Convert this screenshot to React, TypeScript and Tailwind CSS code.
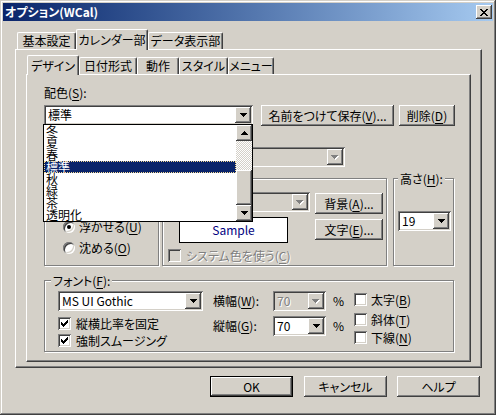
import React from "react";

const raised =
  "shadow-[inset_-1px_-1px_#404040,inset_1px_1px_#fff,inset_-2px_-2px_#808080,inset_2px_2px_#d4d0c8]";
const sunken =
  "shadow-[inset_1px_1px_#808080,inset_-1px_-1px_#fff,inset_2px_2px_#404040,inset_-2px_-2px_#d4d0c8]";
const frame =
  "shadow-[inset_-1px_-1px_#404040,inset_1px_1px_#d4d0c8,inset_-2px_-2px_#808080,inset_2px_2px_#fff]";
const panel =
  "border-t border-l border-white border-r border-b border-r-[#404040] border-b-[#404040] shadow-[inset_-1px_-1px_#808080]";
const etched = "border border-[#808080] shadow-[inset_1px_1px_#fff,1px_1px_#fff]";
const disabledText = "text-[#808080] [text-shadow:1px_1px_#fff]";

const DOWN = ["XXXXXXX", ".XXXXX.", "..XXX..", "...X..."];
const UP = ["...X...", "..XXX..", ".XXXXX.", "XXXXXXX"];
const CROSS = ["XX....XX", ".XX..XX.", "..XXXX..", "...XX...", "..XXXX..", ".XX..XX.", "XX....XX"];
const CHECK = ["......X", ".....XX", "X...XXX", "XX.XXX.", "XXXXX..", ".XXX...", "..X...."];

function Pix({ rows, color = "#000", shadow }: { rows: string[]; color?: string; shadow?: string }) {
  const w = rows[0].length + (shadow ? 1 : 0);
  const h = rows.length + (shadow ? 1 : 0);
  const cells = (off: number, fill: string) =>
    rows.flatMap((r, y) =>
      r.split("").map((c, x) =>
        c === "X" ? <rect key={`${off}-${x}-${y}`} x={x + off} y={y + off} width={1} height={1} fill={fill} /> : null
      )
    );
  return (
    <svg width={w} height={h} shapeRendering="crispEdges" className="block">
      {shadow && cells(1, shadow)}
      {cells(0, color)}
    </svg>
  );
}

function U({ children }: { children: string }) {
  return <span className="underline underline-offset-[2px] decoration-1">{children}</span>;
}

function Btn({ className, children, isDefault }: { className: string; children: React.ReactNode; isDefault?: boolean }) {
  return (
    <div className={`shrink-0 ${isDefault ? "border border-black" : ""} ${className}`}>
      <div className={`flex items-center justify-center bg-[#d4d0c8] w-full h-full ${raised}`}>{children}</div>
    </div>
  );
}

function Arrow({ disabled }: { disabled?: boolean }) {
  return (
    <div className={`w-[16px] h-[16px] shrink-0 flex items-center justify-center bg-[#d4d0c8] ${raised}`}>
      {disabled ? <Pix rows={DOWN} color="#808080" shadow="#fff" /> : <Pix rows={DOWN} />}
    </div>
  );
}

function Combo({ className, value, disabled }: { className: string; value?: string; disabled?: boolean }) {
  return (
    <div className={`flex shrink-0 p-[2px] ${sunken} ${disabled ? "bg-[#d4d0c8]" : "bg-white"} ${className}`}>
      <div className={`flex-1 pl-[2px] leading-[16px] ${disabled ? disabledText : ""}`}>{value}</div>
      <Arrow disabled={disabled} />
    </div>
  );
}

function Check({ checked, disabled }: { checked?: boolean; disabled?: boolean }) {
  return (
    <div
      className={`w-[13px] h-[13px] shrink-0 flex items-center justify-center ${sunken} ${
        disabled ? "bg-[#d4d0c8]" : "bg-white"
      }`}
    >
      {checked && <Pix rows={CHECK} />}
    </div>
  );
}

function Radio({ checked }: { checked?: boolean }) {
  return (
    <div className={`w-[12px] h-[12px] shrink-0 rounded-full bg-white flex items-center justify-center ${sunken}`}>
      {checked && <div className="w-[4px] h-[4px] rounded-full bg-black" />}
    </div>
  );
}

function Tab({ selected, className, children }: { selected?: boolean; className: string; children: React.ReactNode }) {
  return (
    <div
      className={`flex items-center justify-center shrink-0 rounded-t-[2px] bg-[#d4d0c8] border-t border-l border-white border-r border-r-[#404040] shadow-[inset_-1px_0_#808080] ${
        selected ? "relative z-10 -mb-[1px]" : ""
      } ${className}`}
    >
      {children}
    </div>
  );
}

function DropList() {
  const items = ["冬", "夏", "春", "標準", "秋", "緑", "茶", "透明化"];
  return (
    <div className="absolute z-20 left-[-1px] top-[19px] w-[210px] h-[98px] border border-black bg-white flex">
      <div className="flex-1 flex flex-col">
        {items.map((it, i) => (
          <div
            key={it}
            className={`h-[12px] leading-[12px] pl-[2px] ${
              i === 3 ? "bg-[#0a246a] text-white outline-1 outline-dotted outline-[#f5db95] -outline-offset-1" : ""
            }`}
          >
            {it}
          </div>
        ))}
      </div>
      <div className="w-[16px] flex flex-col">
        <div className={`h-[16px] flex items-center justify-center bg-[#d4d0c8] ${raised}`}>
          <Pix rows={UP} />
        </div>
        <div className="h-[29px] bg-[image:repeating-conic-gradient(#fff_0_25%,#d4d0c8_0_50%)] bg-[length:2px_2px]" />
        <div className={`h-[35px] bg-[#d4d0c8] ${raised}`} />
        <div className={`h-[16px] flex items-center justify-center bg-[#d4d0c8] ${raised}`}>
          <Pix rows={DOWN} />
        </div>
      </div>
    </div>
  );
}

export default function App() {
  return (
    <div
      className={`w-[496px] h-[415px] p-[3px] flex flex-col bg-[#d4d0c8] text-black text-[12px] leading-[14px] font-['Noto_Sans_CJK_JP',sans-serif] [font-feature-settings:'palt'] ${frame}`}
    >
      {/* title bar */}
      <div className="h-[18px] shrink-0 flex items-center justify-between pl-[2px] pr-[1px] bg-linear-to-r from-[#0a246a] to-[#a6caf0]">
        <span className="text-white font-bold leading-[18px]">オプション(WCal)</span>
        <div className={`w-[16px] h-[14px] flex items-center justify-center bg-[#d4d0c8] ${raised}`}>
          <Pix rows={CROSS} />
        </div>
      </div>

      <div className="ml-[12px] mt-[8px] w-[467px]">
        {/* outer tabs */}
        <div className="flex items-end h-[20px] pl-[2px]">
          <Tab className="w-[59px] h-[17px]">基本設定</Tab>
          <Tab selected className="w-[72px] h-[21px]">
            カレンダー部
          </Tab>
          <Tab className="w-[75px] h-[17px]">データ表示部</Tab>
        </div>

        <div className={`h-[319px] pl-[10px] pt-[5px] ${panel}`}>
          {/* inner tabs */}
          <div className="flex items-end h-[19px] pl-[1px]">
            <Tab selected className="w-[52px] h-[20px]">
              デザイン
            </Tab>
            <Tab className="w-[58px] h-[17px]">日付形式</Tab>
            <Tab className="w-[42px] h-[17px]">動作</Tab>
            <Tab className="w-[49px] h-[17px]">スタイル</Tab>
            <Tab className="w-[46px] h-[17px]">メニュー</Tab>
          </div>

          <div className={`w-[445px] h-[288px] pl-[17px] pt-[11px] ${panel}`}>
            <div className="h-[14px]">
              配色(<U>S</U>):
            </div>

            <div className="flex items-start mt-[5px]">
              <div className="relative">
                <Combo className="w-[209px] h-[20px]" value="標準" />
                <DropList />
              </div>
              <Btn className="w-[133px] h-[21px] ml-[8px]">
                名前をつけて保存(<U>V</U>)...
              </Btn>
              <Btn className="w-[56px] h-[21px] ml-[5px]">
                削除(<U>D</U>)
              </Btn>
            </div>

            <Combo disabled className="w-[185px] h-[20px] ml-[116px] mt-[21px]" />

            <div className="flex mt-[11px]">
              {/* raised / sunken radio group */}
              <div className={`w-[115px] h-[88px] pl-[18px] pt-[42px] ${etched}`}>
                <div className="flex items-center h-[12px]">
                  <Radio checked />
                  <span className="ml-[4px]">
                    浮かせる(<U>U</U>)
                  </span>
                </div>
                <div className="flex items-center h-[12px] mt-[9px]">
                  <Radio />
                  <span className="ml-[4px]">
                    沈める(<U>O</U>)
                  </span>
                </div>
              </div>

              {/* colour group */}
              <div className={`w-[225px] h-[88px] ml-[3px] ${etched}`}>
                <div className="flex items-start pl-[16px] pt-[13px]">
                  <Combo disabled className="w-[131px] h-[20px]" />
                  <Btn className="w-[68px] h-[21px] ml-[5px] mt-[1px]">
                    背景(<U>A</U>)...
                  </Btn>
                </div>
                <div className="flex items-start pl-[16px] mt-[3px]">
                  <div className="w-[109px] h-[26px] border border-black bg-white flex items-center justify-center text-[#000080]">
                    Sample
                  </div>
                  <Btn className="w-[68px] h-[21px] ml-[27px] mt-[2px]">
                    文字(<U>E</U>)...
                  </Btn>
                </div>
                <div className="flex items-center pl-[5px] mt-[6px] h-[13px]">
                  <Check disabled />
                  <span className={`ml-[5px] ${disabledText}`}>
                    システム色を使う(<U>C</U>)
                  </span>
                </div>
              </div>

              {/* height group */}
              <div className={`relative w-[61px] h-[88px] ml-[6px] pl-[4px] pt-[32px] ${etched}`}>
                <span className="absolute left-[4px] top-[-7px] px-[2px] bg-[#d4d0c8] leading-[13px]">
                  高さ(<U>H</U>):
                </span>
                <Combo className="w-[53px] h-[20px]" value="19" />
              </div>
            </div>

            {/* font group */}
            <div className={`relative w-[410px] h-[72px] mt-[14px] flex pl-[13px] pt-[10px] ${etched}`}>
              <span className="absolute left-[6px] top-[-7px] px-[2px] bg-[#d4d0c8] leading-[13px]">
                フォント(<U>F</U>):
              </span>
              <div className="w-[145px] flex flex-col">
                <Combo className="w-[145px] h-[20px]" value="MS UI Gothic" />
                <div className="flex items-center h-[13px] mt-[6px]">
                  <Check checked />
                  <span className="ml-[5px]">縦横比率を固定</span>
                </div>
                <div className="flex items-center h-[13px] mt-[4px]">
                  <Check checked />
                  <span className="ml-[5px]">強制スムージング</span>
                </div>
              </div>
              <div className="w-[141px] ml-[10px] flex flex-col">
                <div className="flex items-center h-[20px]">
                  <span className="w-[60px]">
                    横幅(<U>W</U>):
                  </span>
                  <Combo disabled className="w-[53px] h-[20px]" value="70" />
                  <span className="ml-[7px]">%</span>
                </div>
                <div className="flex items-center h-[20px] mt-[5px]">
                  <span className="w-[60px]">
                    縦幅(<U>G</U>):
                  </span>
                  <Combo className="w-[53px] h-[20px]" value="70" />
                  <span className="ml-[7px]">%</span>
                </div>
              </div>
              <div className="flex flex-col mt-[2px]">
                <div className="flex items-center h-[13px]">
                  <Check />
                  <span className="ml-[4px]">
                    太字(<U>B</U>)
                  </span>
                </div>
                <div className="flex items-center h-[13px] mt-[7px]">
                  <Check />
                  <span className="ml-[4px]">
                    斜体(<U>T</U>)
                  </span>
                </div>
                <div className="flex items-center h-[13px] mt-[5px]">
                  <Check />
                  <span className="ml-[4px]">
                    下線(<U>N</U>)
                  </span>
                </div>
              </div>
            </div>
          </div>
        </div>
      </div>

      {/* dialog buttons */}
      <div className="flex justify-end pr-[13px] mt-[8px]">
        <Btn isDefault className="w-[83px] h-[21px]">
          OK
        </Btn>
        <Btn className="w-[83px] h-[21px] ml-[11px]">キャンセル</Btn>
        <Btn className="w-[83px] h-[21px] ml-[10px]">ヘルプ</Btn>
      </div>
    </div>
  );
}
